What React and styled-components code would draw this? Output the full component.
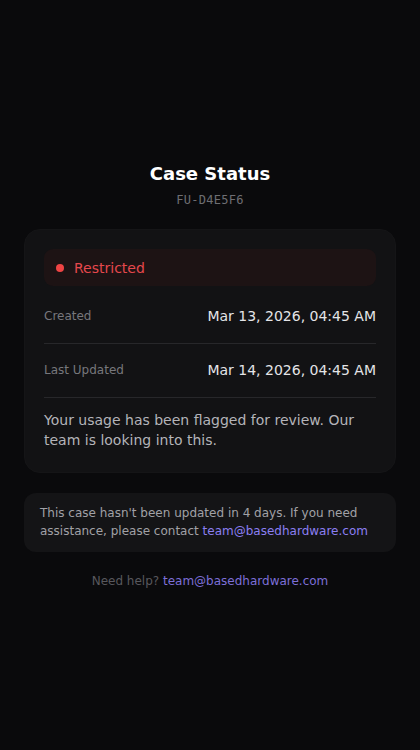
import React from "react";
import styled, { createGlobalStyle } from "styled-components";

const Global = createGlobalStyle`
  html, body { margin: 0; padding: 0; background: #0a0a0c; }
  body { font-family: "DejaVu Sans", "Liberation Sans", sans-serif; }
  * { box-sizing: border-box; }
`;

const Page = styled.div`
  min-height: 750px;
  display: flex;
  flex-direction: column;
  align-items: stretch;
  padding: 162px 24px 40px;
  background: #0a0a0c;
`;

const Header = styled.header`
  display: flex;
  flex-direction: column;
  align-items: center;
  gap: 6px;
  margin-bottom: 21px;
`;

const Title = styled.h1`
  margin: 0;
  font-size: 18px;
  line-height: 24px;
  font-weight: 700;
  color: #ffffff;
`;

const CaseId = styled.div`
  font-family: "DejaVu Sans Mono", "Liberation Mono", monospace;
  font-size: 12px;
  line-height: 16px;
  color: #6e6e73;
  letter-spacing: 0.3px;
`;

const Card = styled.section`
  background: #121214;
  border: 1px solid #151517;
  border-radius: 16px;
  padding: 19px 19px 22px;
  display: flex;
  flex-direction: column;
`;

const Badge = styled.div`
  height: 37px;
  display: flex;
  align-items: center;
  gap: 10px;
  padding: 0 12px;
  border-radius: 9px;
  background: #1d1314;
  color: #e5484d;
  font-size: 14px;
  margin-bottom: 4px;
`;

const Dot = styled.span`
  width: 8px;
  height: 8px;
  border-radius: 50%;
  background: #ef4444;
`;

const Row = styled.div`
  display: flex;
  justify-content: space-between;
  align-items: center;
  padding: 16px 0;
  border-bottom: 1px solid #27272a;
`;

const Label = styled.span`
  font-size: 12px;
  line-height: 21px;
  color: #77777c;
`;

const Value = styled.span`
  font-size: 14px;
  line-height: 21px;
  color: #e4e4e7;
`;

const Description = styled.p`
  margin: 12px 0 0;
  font-size: 14px;
  line-height: 20px;
  color: #b4b4b9;
`;

const Notice = styled.div`
  margin-top: 20px;
  background: #141416;
  border-radius: 12px;
  padding: 11px 16px 12px;
  font-size: 12px;
  line-height: 18px;
  color: #a1a1a6;
`;

const Link = styled.a`
  color: ${(p) => (p.$dim ? "#7d6fd8" : "#8b7ff2")};
  text-decoration: none;
`;

const Footer = styled.div`
  margin-top: 21px;
  text-align: center;
  font-size: 12px;
  line-height: 16px;
  color: #58585d;
`;

export default function App() {
  return (
    <>
      <Global />
      <Page>
        <Header>
          <Title>Case Status</Title>
          <CaseId>FU-D4E5F6</CaseId>
        </Header>
        <Card>
          <Badge>
            <Dot />
            Restricted
          </Badge>
          <Row>
            <Label>Created</Label>
            <Value>Mar 13, 2026, 04:45 AM</Value>
          </Row>
          <Row>
            <Label>Last Updated</Label>
            <Value>Mar 14, 2026, 04:45 AM</Value>
          </Row>
          <Description>
            Your usage has been flagged for review. Our team is looking into this.
          </Description>
        </Card>
        <Notice>
          This case hasn't been updated in 4 days. If you need assistance, please contact{" "}
          <Link href="mailto:team@basedhardware.com">team@basedhardware.com</Link>
        </Notice>
        <Footer>
          Need help? <Link $dim href="mailto:team@basedhardware.com">team@basedhardware.com</Link>
        </Footer>
      </Page>
    </>
  );
}
